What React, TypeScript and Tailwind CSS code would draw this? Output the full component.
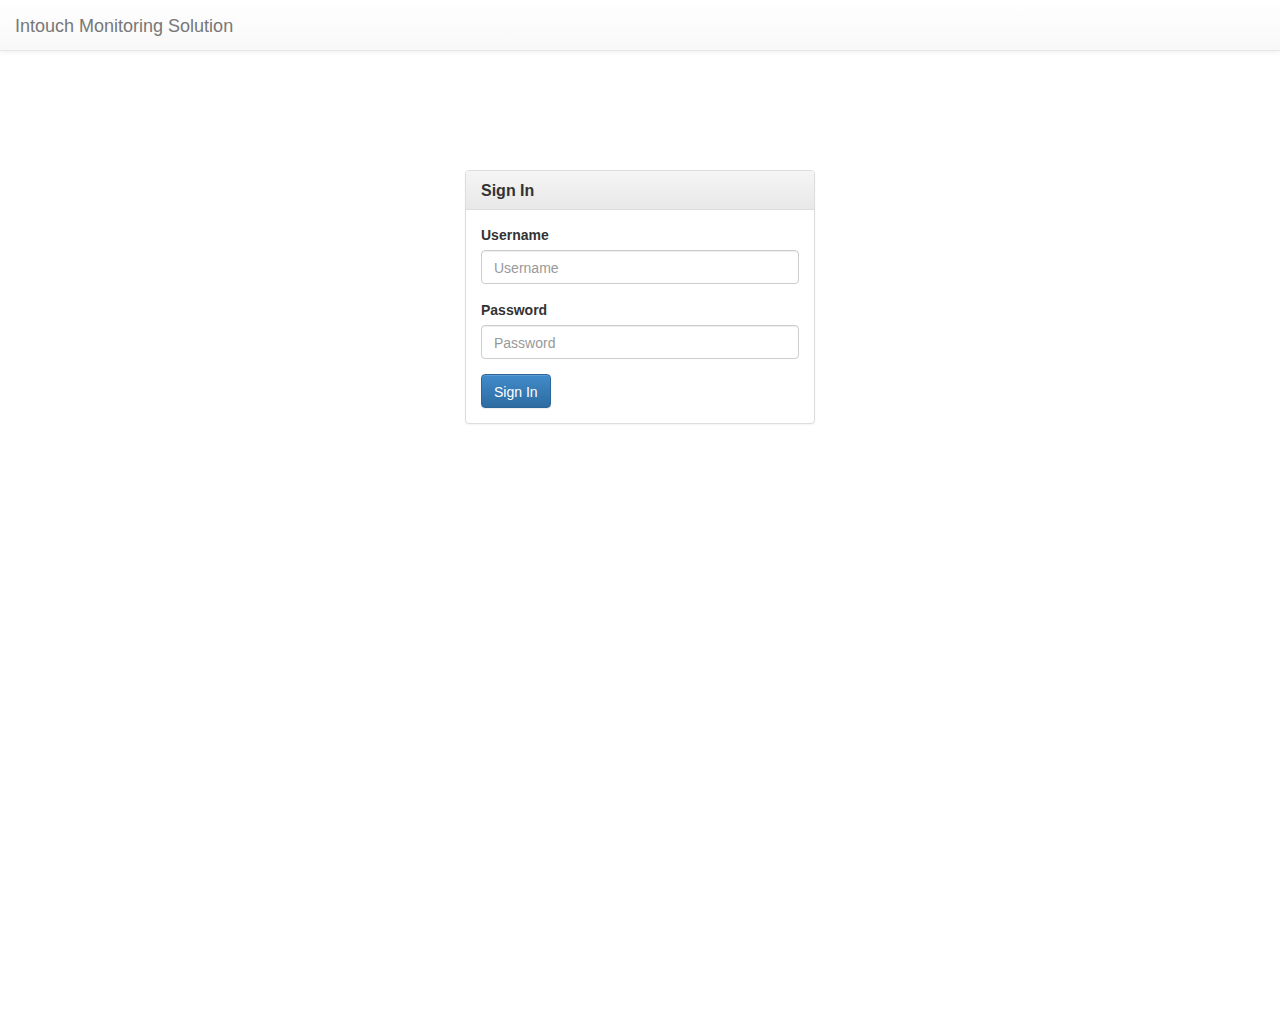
export default function App() {
  return (
    <div className="min-h-screen bg-white text-[14px] leading-[20px] text-[#333]" style={{ fontFamily: '"Liberation Sans", Arial, sans-serif' }}>
      <nav className="h-[51px] border-b border-[#e7e7e7] bg-gradient-to-b from-white to-[#f8f8f8] shadow-[inset_0_1px_0_rgba(255,255,255,0.15),0_1px_5px_rgba(0,0,0,0.075)]">
        <div className="flex h-[50px] items-center px-[15px] pt-[2px]">
          <a className="text-[18px] leading-[20px] text-[#777]">Intouch Monitoring Solution</a>
        </div>
      </nav>

      <div className="flex justify-center pt-[119px]">
        <div className="w-[350px] rounded-[4px] border border-[#ddd] bg-white shadow-[0_1px_2px_rgba(0,0,0,0.05)]">
          <div className="rounded-t-[3px] border-b border-[#ddd] bg-gradient-to-b from-[#f5f5f5] to-[#e8e8e8] px-[15px] pb-[9px] pt-[11px]">
            <h3 className="text-[16px] font-bold leading-[18px]">Sign In</h3>
          </div>
          <form className="p-[15px]" onSubmit={(e) => e.preventDefault()}>
            <div className="mb-[16px]">
              <label className="mb-[5px] block font-bold">Username</label>
              <input
                type="text"
                placeholder="Username"
                className="block h-[34px] w-full rounded-[4px] border border-[#ccc] px-3 pb-[5px] pt-[7px] text-[14px] text-[#555] shadow-[inset_0_1px_1px_rgba(0,0,0,0.075)] placeholder:text-[#999] focus:outline-none"
              />
            </div>
            <div className="mb-[15px]">
              <label className="mb-[5px] block font-bold">Password</label>
              <input
                type="password"
                placeholder="Password"
                className="block h-[34px] w-full rounded-[4px] border border-[#ccc] px-3 pb-[5px] pt-[7px] text-[14px] text-[#555] shadow-[inset_0_1px_1px_rgba(0,0,0,0.075)] placeholder:text-[#999] focus:outline-none"
              />
            </div>
            <button
              type="submit"
              className="h-[34px] rounded-[4px] border border-[#2b669a] bg-gradient-to-b from-[#428bca] to-[#2d6ca2] px-3 pt-px text-[14px] text-white shadow-[inset_0_1px_0_rgba(255,255,255,0.15),0_1px_1px_rgba(0,0,0,0.075)]"
            >
              Sign In
            </button>
          </form>
        </div>
      </div>
    </div>
  );
}
